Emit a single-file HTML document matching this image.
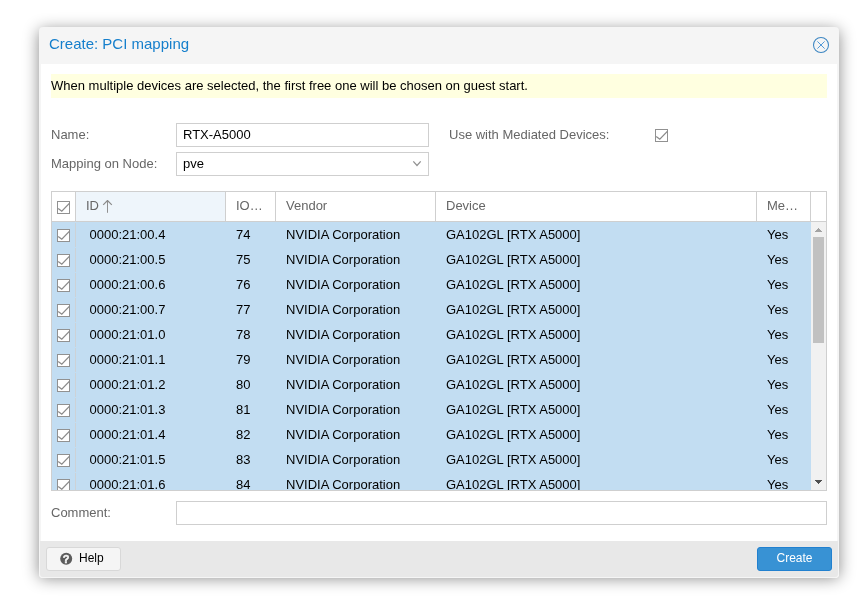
<!DOCTYPE html>
<html><head><meta charset="utf-8"><title>Create: PCI mapping</title>
<style>
html,body{margin:0;padding:0;background:#fff;}
body{width:868px;height:610px;position:relative;overflow:hidden;font-family:"Liberation Sans",Helvetica,Arial,sans-serif;font-size:13px;color:#000;}
#layer{position:absolute;left:0;top:0;width:868px;height:610px;will-change:transform;}
.abs{position:absolute;}
svg{display:block;}
#win{position:absolute;left:39px;top:27px;width:800px;height:551px;background:#f5f5f5;border-radius:4px;}
#shadow{position:absolute;left:39px;top:30px;width:800px;height:548px;border-radius:4px;box-shadow:0 0 16px #888;}
#title{position:absolute;left:10px;top:8px;font-size:15px;color:#157fcc;line-height:18px;white-space:nowrap;}
#body{position:absolute;left:2px;top:37px;width:796px;height:477px;background:#fff;}
#foot{position:absolute;left:1px;top:514px;width:798px;height:36px;background:#e8e8e8;border-radius:0 0 3px 3px;}
#hint{position:absolute;left:51px;top:74px;width:776px;height:24px;background:#ffffe0;line-height:23px;white-space:nowrap;}
.lbl{position:absolute;color:#666;line-height:15px;white-space:nowrap;}
.inp{position:absolute;box-sizing:border-box;border:1px solid #cfcfcf;background:#fff;height:24px;line-height:22px;padding-left:6px;white-space:nowrap;}
#grid{position:absolute;left:51px;top:191px;width:776px;height:300px;box-sizing:border-box;border:1px solid #cfcfcf;overflow:hidden;background:#fff;}
#ghead{position:absolute;left:0;top:0;width:774px;height:29px;border-bottom:1px solid #cfcfcf;background:#fff;}
.h{position:absolute;top:0;height:29px;box-sizing:border-box;border-right:1px solid #cfcfcf;color:#666;line-height:27px;padding-left:10px;white-space:nowrap;}
#gbody{position:absolute;left:0;top:30px;width:759px;height:268px;overflow:hidden;background:#c2ddf2;}
.row{position:absolute;left:0;width:759px;height:25px;background:#c2ddf2;}
.c{position:absolute;top:0;line-height:25px;white-space:nowrap;}
.c0{position:absolute;left:0;top:1px;width:23px;height:24px;border-right:1px solid #cdd2d6;}
.c0 .cb{position:absolute;left:5px;top:5px;}
.c1{left:37.5px;} .c2{left:184px;} .c3{left:234px;} .c4{left:394px;} .c5{left:715px;}
#sb{position:absolute;left:759px;top:30px;width:15px;height:268px;background:#f1f1f1;}
.btn{position:absolute;box-sizing:border-box;height:24px;border-radius:3px;line-height:20px;font-size:12px;text-align:center;white-space:nowrap;}
</style></head><body>
<div id="layer">
<div id="shadow"></div>
<div id="win">
 <div id="title">Create: PCI mapping</div>
 <svg class="abs" style="left:773px;top:9px" width="18" height="18" viewBox="0 0 18 18"><circle cx="9" cy="9" r="7.5" fill="none" stroke="#3d86c2" stroke-width="1.05"/><path d="M5.4 5.4 L12.6 12.6 M12.6 5.4 L5.4 12.6" stroke="#4a93d6" stroke-width="0.95" fill="none"/></svg>
 <div id="body"></div>
 <div id="foot"></div>
</div>
<div id="hint">When multiple devices are selected, the first free one will be chosen on guest start.</div>
<div class="lbl" style="left:51px;top:127px">Name:</div>
<div class="inp" style="left:176px;top:123px;width:253px">RTX-A5000</div>
<div class="lbl" style="left:51px;top:156px">Mapping on Node:</div>
<div class="inp" style="left:176px;top:152px;width:253px;">pve
 <svg class="abs" style="left:235px;top:7px" width="12" height="8" viewBox="0 0 12 8"><path d="M1.3 1.3 L5 5.5 L8.7 1.3" fill="none" stroke="#919191" stroke-width="1.25"/></svg>
</div>
<div class="lbl" style="left:449px;top:127px">Use with Mediated Devices:</div>
<div class="abs" style="left:655px;top:128px"><svg class="cb" width="15" height="15" viewBox="0 0 15 15"><rect x="0.5" y="1.5" width="12" height="12" fill="#fff" stroke="#919191" stroke-width="1"/><path d="M1.2 8.4 L4.8 11.2 L12.6 3.1" fill="none" stroke="#8a8a8a" stroke-width="1.3"/></svg></div>
<div id="grid">
 <div id="ghead">
  <div class="h" style="left:0;width:24px;padding:0"><span class="abs" style="left:5px;top:8px"><svg class="cb" width="15" height="15" viewBox="0 0 15 15"><rect x="0.5" y="1.5" width="12" height="12" fill="#fff" stroke="#919191" stroke-width="1"/><path d="M1.2 8.4 L4.8 11.2 L12.6 3.1" fill="none" stroke="#8a8a8a" stroke-width="1.3"/></svg></span></div>
  <div class="h" style="left:24px;width:150px;background:#eef5fb;">ID<svg class="abs" style="left:26px;top:8px" width="11" height="13" viewBox="0 0 11 13"><path d="M5.5 12.8 V0.6" fill="none" stroke="#919191" stroke-width="1"/><path d="M1.2 4.8 L5.5 0.5 L9.8 4.8" fill="none" stroke="#8a8a8a" stroke-width="1.2"/></svg></div>
  <div class="h" style="left:174px;width:50px;">IO…</div>
  <div class="h" style="left:224px;width:160px;">Vendor</div>
  <div class="h" style="left:384px;width:321px;">Device</div>
  <div class="h" style="left:705px;width:54px;">Me…</div>
 </div>
 <div id="gbody">
<div class="row" style="top:0px"><span class="c0"><svg class="cb" width="15" height="15" viewBox="0 0 15 15"><rect x="0.5" y="1.5" width="12" height="12" fill="#fff" stroke="#919191" stroke-width="1"/><path d="M1.2 8.4 L4.8 11.2 L12.6 3.1" fill="none" stroke="#8a8a8a" stroke-width="1.3"/></svg></span><span class="c c1">0000:21:00.4</span><span class="c c2">74</span><span class="c c3">NVIDIA Corporation</span><span class="c c4">GA102GL [RTX A5000]</span><span class="c c5">Yes</span></div>
<div class="row" style="top:25px"><span class="c0"><svg class="cb" width="15" height="15" viewBox="0 0 15 15"><rect x="0.5" y="1.5" width="12" height="12" fill="#fff" stroke="#919191" stroke-width="1"/><path d="M1.2 8.4 L4.8 11.2 L12.6 3.1" fill="none" stroke="#8a8a8a" stroke-width="1.3"/></svg></span><span class="c c1">0000:21:00.5</span><span class="c c2">75</span><span class="c c3">NVIDIA Corporation</span><span class="c c4">GA102GL [RTX A5000]</span><span class="c c5">Yes</span></div>
<div class="row" style="top:50px"><span class="c0"><svg class="cb" width="15" height="15" viewBox="0 0 15 15"><rect x="0.5" y="1.5" width="12" height="12" fill="#fff" stroke="#919191" stroke-width="1"/><path d="M1.2 8.4 L4.8 11.2 L12.6 3.1" fill="none" stroke="#8a8a8a" stroke-width="1.3"/></svg></span><span class="c c1">0000:21:00.6</span><span class="c c2">76</span><span class="c c3">NVIDIA Corporation</span><span class="c c4">GA102GL [RTX A5000]</span><span class="c c5">Yes</span></div>
<div class="row" style="top:75px"><span class="c0"><svg class="cb" width="15" height="15" viewBox="0 0 15 15"><rect x="0.5" y="1.5" width="12" height="12" fill="#fff" stroke="#919191" stroke-width="1"/><path d="M1.2 8.4 L4.8 11.2 L12.6 3.1" fill="none" stroke="#8a8a8a" stroke-width="1.3"/></svg></span><span class="c c1">0000:21:00.7</span><span class="c c2">77</span><span class="c c3">NVIDIA Corporation</span><span class="c c4">GA102GL [RTX A5000]</span><span class="c c5">Yes</span></div>
<div class="row" style="top:100px"><span class="c0"><svg class="cb" width="15" height="15" viewBox="0 0 15 15"><rect x="0.5" y="1.5" width="12" height="12" fill="#fff" stroke="#919191" stroke-width="1"/><path d="M1.2 8.4 L4.8 11.2 L12.6 3.1" fill="none" stroke="#8a8a8a" stroke-width="1.3"/></svg></span><span class="c c1">0000:21:01.0</span><span class="c c2">78</span><span class="c c3">NVIDIA Corporation</span><span class="c c4">GA102GL [RTX A5000]</span><span class="c c5">Yes</span></div>
<div class="row" style="top:125px"><span class="c0"><svg class="cb" width="15" height="15" viewBox="0 0 15 15"><rect x="0.5" y="1.5" width="12" height="12" fill="#fff" stroke="#919191" stroke-width="1"/><path d="M1.2 8.4 L4.8 11.2 L12.6 3.1" fill="none" stroke="#8a8a8a" stroke-width="1.3"/></svg></span><span class="c c1">0000:21:01.1</span><span class="c c2">79</span><span class="c c3">NVIDIA Corporation</span><span class="c c4">GA102GL [RTX A5000]</span><span class="c c5">Yes</span></div>
<div class="row" style="top:150px"><span class="c0"><svg class="cb" width="15" height="15" viewBox="0 0 15 15"><rect x="0.5" y="1.5" width="12" height="12" fill="#fff" stroke="#919191" stroke-width="1"/><path d="M1.2 8.4 L4.8 11.2 L12.6 3.1" fill="none" stroke="#8a8a8a" stroke-width="1.3"/></svg></span><span class="c c1">0000:21:01.2</span><span class="c c2">80</span><span class="c c3">NVIDIA Corporation</span><span class="c c4">GA102GL [RTX A5000]</span><span class="c c5">Yes</span></div>
<div class="row" style="top:175px"><span class="c0"><svg class="cb" width="15" height="15" viewBox="0 0 15 15"><rect x="0.5" y="1.5" width="12" height="12" fill="#fff" stroke="#919191" stroke-width="1"/><path d="M1.2 8.4 L4.8 11.2 L12.6 3.1" fill="none" stroke="#8a8a8a" stroke-width="1.3"/></svg></span><span class="c c1">0000:21:01.3</span><span class="c c2">81</span><span class="c c3">NVIDIA Corporation</span><span class="c c4">GA102GL [RTX A5000]</span><span class="c c5">Yes</span></div>
<div class="row" style="top:200px"><span class="c0"><svg class="cb" width="15" height="15" viewBox="0 0 15 15"><rect x="0.5" y="1.5" width="12" height="12" fill="#fff" stroke="#919191" stroke-width="1"/><path d="M1.2 8.4 L4.8 11.2 L12.6 3.1" fill="none" stroke="#8a8a8a" stroke-width="1.3"/></svg></span><span class="c c1">0000:21:01.4</span><span class="c c2">82</span><span class="c c3">NVIDIA Corporation</span><span class="c c4">GA102GL [RTX A5000]</span><span class="c c5">Yes</span></div>
<div class="row" style="top:225px"><span class="c0"><svg class="cb" width="15" height="15" viewBox="0 0 15 15"><rect x="0.5" y="1.5" width="12" height="12" fill="#fff" stroke="#919191" stroke-width="1"/><path d="M1.2 8.4 L4.8 11.2 L12.6 3.1" fill="none" stroke="#8a8a8a" stroke-width="1.3"/></svg></span><span class="c c1">0000:21:01.5</span><span class="c c2">83</span><span class="c c3">NVIDIA Corporation</span><span class="c c4">GA102GL [RTX A5000]</span><span class="c c5">Yes</span></div>
<div class="row" style="top:250px"><span class="c0"><svg class="cb" width="15" height="15" viewBox="0 0 15 15"><rect x="0.5" y="1.5" width="12" height="12" fill="#fff" stroke="#919191" stroke-width="1"/><path d="M1.2 8.4 L4.8 11.2 L12.6 3.1" fill="none" stroke="#8a8a8a" stroke-width="1.3"/></svg></span><span class="c c1">0000:21:01.6</span><span class="c c2">84</span><span class="c c3">NVIDIA Corporation</span><span class="c c4">GA102GL [RTX A5000]</span><span class="c c5">Yes</span></div>

 </div>
 <div id="sb">
  <svg class="abs" style="left:0;top:0" width="15" height="268" viewBox="0 0 15 268" shape-rendering="crispEdges"><g fill="#a3a3a3"><rect x="7" y="6" width="1" height="1"/><rect x="6" y="7" width="3" height="1"/><rect x="5" y="8" width="5" height="1"/><rect x="4" y="9" width="7" height="1"/></g><rect x="2" y="15" width="11" height="106" fill="#c1c1c1"/><g fill="#505050"><rect x="4" y="258" width="7" height="1"/><rect x="5" y="259" width="5" height="1"/><rect x="6" y="260" width="3" height="1"/><rect x="7" y="261" width="1" height="1"/></g></svg>
 </div>
</div>
<div class="lbl" style="left:51px;top:505px">Comment:</div>
<div class="inp" style="left:176px;top:501px;width:651px"></div>
<div class="btn" style="left:46px;top:547px;width:75px;border:1px solid #d8d8d8;background:#f5f5f5;color:#000;">
 <svg class="abs" style="left:12px;top:4px" width="14" height="14" viewBox="0 0 14 14"><circle cx="7.2" cy="6.800" r="6" fill="#5c5c5c"/><text x="7.200" y="10.950" font-family="Liberation Sans, sans-serif" font-weight="bold" font-size="11" fill="#f8f8f8" stroke="#f8f8f8" stroke-width="0.45" text-anchor="middle">?</text></svg>
 <span class="abs" style="left:32px;top:0">Help</span></div>
<div class="btn" style="left:757px;top:547px;width:75px;border:1px solid #2180cf;background:#3892d4;color:#fff;">Create</div>
</div>
</body></html>
